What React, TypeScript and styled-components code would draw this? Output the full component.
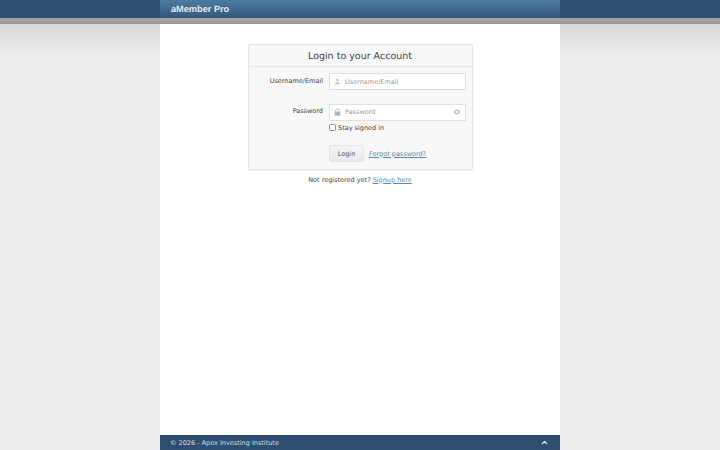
import React from "react";
import styled, { createGlobalStyle } from "styled-components";
import { ChevronUp } from "lucide-react";

const Global = createGlobalStyle`
  html, body { margin: 0; padding: 0; height: 100%; }
  body {
    font-family: "DejaVu Sans", sans-serif;
    font-size: 6.5px;
    color: #444;
    background: #ececec;
    text-rendering: geometricPrecision;
  }
  * { box-sizing: border-box; }
`;

const Page = styled.div`
  height: 450px;
  display: flex;
  flex-direction: column;
  overflow: hidden;
  background: linear-gradient(#d9d9d9, #ececec 30px, #ececec) 0 24px no-repeat;
`;

const HeaderBar = styled.header`
  height: 18px;
  flex: none;
  background: #2f4f70;
  display: flex;
  justify-content: center;
`;

const HeaderInner = styled.div`
  width: 400px;
  padding-left: 11px;
  display: flex;
  align-items: center;
  background: linear-gradient(#4d7aa1, #35587c);
`;

const Logo = styled.span`
  font-family: "Liberation Sans", sans-serif;
  font-weight: 700;
  font-size: 9.2px;
  color: #e6ebf0;
`;

const GreyBand = styled.div`
  height: 6px;
  flex: none;
  background: linear-gradient(#a6a6a6, #989898);
`;

const Main = styled.main`
  width: 400px;
  flex: 1;
  margin: 0 auto;
  background: #fff;
  padding-top: 20px;
  display: flex;
  flex-direction: column;
  align-items: center;
`;

const Card = styled.section`
  width: 225px;
  background: #f8f8f8;
  border: 1px solid #e4e4e4;
  border-radius: 2px;
  box-shadow: 0 1px 1px rgba(0, 0, 0, 0.05);
`;

const CardTitle = styled.h1`
  margin: 0;
  height: 22px;
  padding-top: 1px;
  display: flex;
  align-items: center;
  justify-content: center;
  font-size: 9.5px;
  font-weight: 400;
  color: #444;
  border-bottom: 1px solid #e6e6e6;
`;

const FormBody = styled.form`
  padding: 6px 5.5px 7px 0;
`;

const Row = styled.div<{ $gap?: number }>`
  display: grid;
  grid-template-columns: 74.5px 136.5px;
  column-gap: 6px;
  margin-bottom: ${({ $gap }) => $gap ?? 0}px;
`;

const Label = styled.label`
  text-align: right;
  padding-top: 3.5px;
  line-height: 9px;
  color: #444;
`;

const InputBox = styled.div`
  height: 17px;
  background: #fff;
  border: 1px solid #e0e0e0;
  display: flex;
  align-items: center;
  gap: 4px;
  padding: 0 4px;
`;

const Input = styled.input`
  flex: 1;
  min-width: 0;
  border: 0;
  padding: 0;
  outline: 0;
  background: transparent;
  font: inherit;
  &::placeholder { color: #999; opacity: 1; }
`;

const Remember = styled.label`
  grid-column: 2;
  display: flex;
  align-items: center;
  gap: 2px;
  height: 14px;
`;

const Check = styled.input`
  appearance: none;
  width: 7px;
  height: 7px;
  margin: 0;
  background: #fff;
  border: 1px solid #8c8c8c;
  border-radius: 1.5px;
`;

const Actions = styled.div`
  grid-column: 2;
  margin-top: 10.5px;
  display: flex;
  align-items: center;
  gap: 5px;
`;

const Button = styled.button`
  width: 35px;
  height: 17px;
  padding: 0;
  font: inherit;
  color: #555;
  background: linear-gradient(#f6f6f6, #e8e8e8);
  border: 1px solid #e4e4e4;
  border-radius: 2px;
`;

const TextLink = styled.a`
  color: #5b88ad;
  text-decoration: underline;
`;

const Signup = styled.p`
  margin: 5.5px 0 0;
  line-height: 9px;
`;

const FooterBar = styled.footer`
  width: 400px;
  height: 15px;
  flex: none;
  margin: 0 auto;
  padding: 0 11px 0 10px;
  background: #2f4f70;
  color: #d5dee6;
  display: flex;
  align-items: center;
  justify-content: space-between;
`;

const UserGlyph = () => (
  <svg width="7" height="7" viewBox="0 0 8 8" fill="#c4c4c4" style={{ flex: "none" }}>
    <circle cx="4" cy="2.4" r="1.6" />
    <path d="M1 7c0-1.6 1.4-2.2 3-2.2S7 5.4 7 7z" />
  </svg>
);

const LockGlyph = () => (
  <svg width="7" height="8" viewBox="0 0 8 9" style={{ flex: "none" }}>
    <path d="M2 4V2.8a2 2 0 0 1 4 0V4" fill="none" stroke="#b5b5b5" />
    <rect x="0.8" y="4" width="6.4" height="4.6" fill="#b5b5b5" />
  </svg>
);

const EyeGlyph = () => (
  <svg width="8" height="6" viewBox="0 0 9 7" style={{ flex: "none" }}>
    <path d="M.4 3.5C1.5 1.5 3 .6 4.5 .6s3 .9 4.1 2.9C7.5 5.5 6 6.4 4.5 6.4S1.5 5.5.4 3.5z" fill="#c4c4c4" />
    <circle cx="4.5" cy="3.5" r="1.3" fill="#fff" />
  </svg>
);

export default function App() {
  return (
    <>
      <Global />
      <Page>
        <HeaderBar>
          <HeaderInner>
            <Logo>aMember Pro</Logo>
          </HeaderInner>
        </HeaderBar>
        <GreyBand />
        <Main>
          <Card>
            <CardTitle>Login to your Account</CardTitle>
            <FormBody>
              <Row $gap={13.5}>
                <Label>Username/Email</Label>
                <InputBox>
                  <UserGlyph />
                  <Input placeholder="Username/Email" />
                </InputBox>
              </Row>
              <Row>
                <Label>Password</Label>
                <InputBox>
                  <LockGlyph />
                  <Input placeholder="Password" />
                  <EyeGlyph />
                </InputBox>
                <Remember>
                  <Check type="checkbox" />
                  Stay signed in
                </Remember>
                <Actions>
                  <Button type="button">Login</Button>
                  <TextLink href="#">Forgot password?</TextLink>
                </Actions>
              </Row>
            </FormBody>
          </Card>
          <Signup>
            Not registered yet? <TextLink href="#">Signup here</TextLink>
          </Signup>
        </Main>
        <FooterBar>
          <span>© 2026 - Apex Investing Institute</span>
          <ChevronUp size={9} strokeWidth={3.5} color="#e6ecf1" />
        </FooterBar>
      </Page>
    </>
  );
}
